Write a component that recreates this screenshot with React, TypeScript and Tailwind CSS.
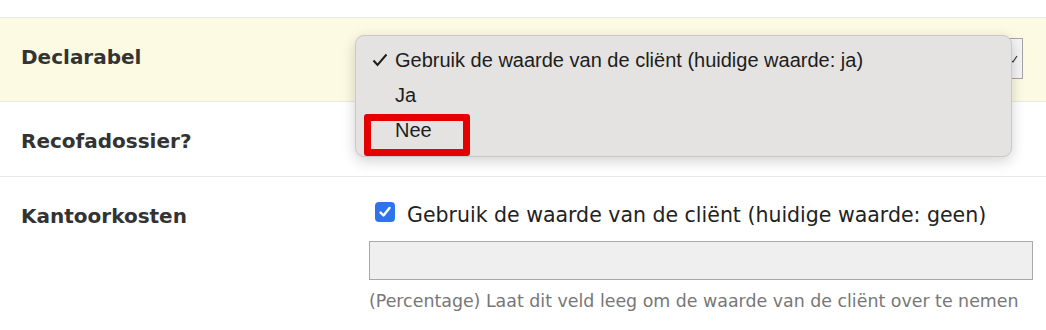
import React from 'react';

const labelFont = { fontFamily: '"DejaVu Sans", Verdana, sans-serif' };

const Row: React.FC<{ label: string; className?: string; children?: React.ReactNode }> = ({
  label,
  className = '',
  children,
}) => (
  <div className={`flex items-start border-b border-[#e8e8e8] pt-[27px] ${className}`}>
    <div className="w-[348px] shrink-0 pl-[21px] text-[20px] leading-[24px] font-bold text-[#333]">{label}</div>
    <div className="flex-1 pr-[13px]">{children}</div>
  </div>
);

export default function App() {
  return (
    <div className="relative h-[330px] w-[1046px] overflow-hidden bg-white" style={labelFont}>
      <div className="h-[18px] border-b border-[#e8e8e8]" />

      {/* Declarabel */}
      <Row label="Declarabel" className="h-[84px] bg-[#fcfae3]">
        <div className="-mt-[7px] ml-[21px] mr-[10px] flex h-[41px] items-center justify-end border border-[#a5a5a5] bg-[#f4f4f4] pr-[4px]">
          <svg width="8" height="8" viewBox="0 0 8 8" className="text-[#333]">
            <path d="M1 5.5 L3 7 L7 1" fill="none" stroke="currentColor" strokeWidth="1.2" />
          </svg>
        </div>
      </Row>

      {/* Recofadossier */}
      <Row label="Recofadossier?" className="h-[75px]" />

      {/* Kantoorkosten */}
      <div className="flex items-start pt-[26px]">
        <div className="w-[348px] shrink-0 pl-[21px] pt-px text-[20px] leading-[24px] font-bold text-[#333]">Kantoorkosten</div>
        <div className="flex-1 pr-[13px]">
          <label className="ml-[27px] flex items-start gap-[12px] text-[20.5px] leading-[24px] text-[#222]">
            <span className="-mt-px flex h-[20px] w-[20px] shrink-0 items-center justify-center rounded-[4px] bg-[#2f73ec]">
              <svg width="14" height="14" viewBox="0 0 14 14">
                <path d="M2.5 7.5 L5.5 10.5 L11.5 3" fill="none" stroke="white" strokeWidth="2.4" strokeLinecap="round" strokeLinejoin="round" />
              </svg>
            </span>
            Gebruik de waarde van de cliënt (huidige waarde: geen)
          </label>
          <div className="ml-[21px] mt-[14px] h-[39px] border border-[#a8a8a8] bg-[#efefef]" />
          <p className="ml-[21px] mt-[10px] text-[17.4px] leading-[22px] text-[#777]">
            (Percentage) Laat dit veld leeg om de waarde van de cliënt over te nemen
          </p>
        </div>
      </div>

      {/* open select menu */}
      <div
        className="absolute left-[355px] top-[35px] h-[122px] w-[657px] rounded-[9px] border border-[#c9c9c9] bg-[#e4e3e1] shadow-[0_4px_14px_rgba(0,0,0,0.18)]"
        style={{ fontFamily: '"Liberation Sans", Arial, sans-serif' }}
      >
        <ul className="pt-[6px] text-[20px] text-[#1d1d1d]">
          <li className="flex h-[35px] items-center">
            <span className="w-[39px] pl-[16px]">
              <svg width="16" height="14" viewBox="0 0 16 14">
                <path d="M1.5 7.5 L5.5 12 L14.5 1.5" fill="none" stroke="#1d1d1d" strokeWidth="2" />
              </svg>
            </span>
            Gebruik de waarde van de cliënt (huidige waarde: ja)
          </li>
          <li className="flex h-[35px] items-center pl-[39px]">Ja</li>
          <li className="flex h-[35px] items-center pl-[39px]">Nee</li>
        </ul>
      </div>

      {/* red highlight */}
      <div className="absolute left-[364px] top-[114px] h-[42px] w-[106px] rounded-[3px] border-[7px] border-[#e20000]" />
    </div>
  );
}
